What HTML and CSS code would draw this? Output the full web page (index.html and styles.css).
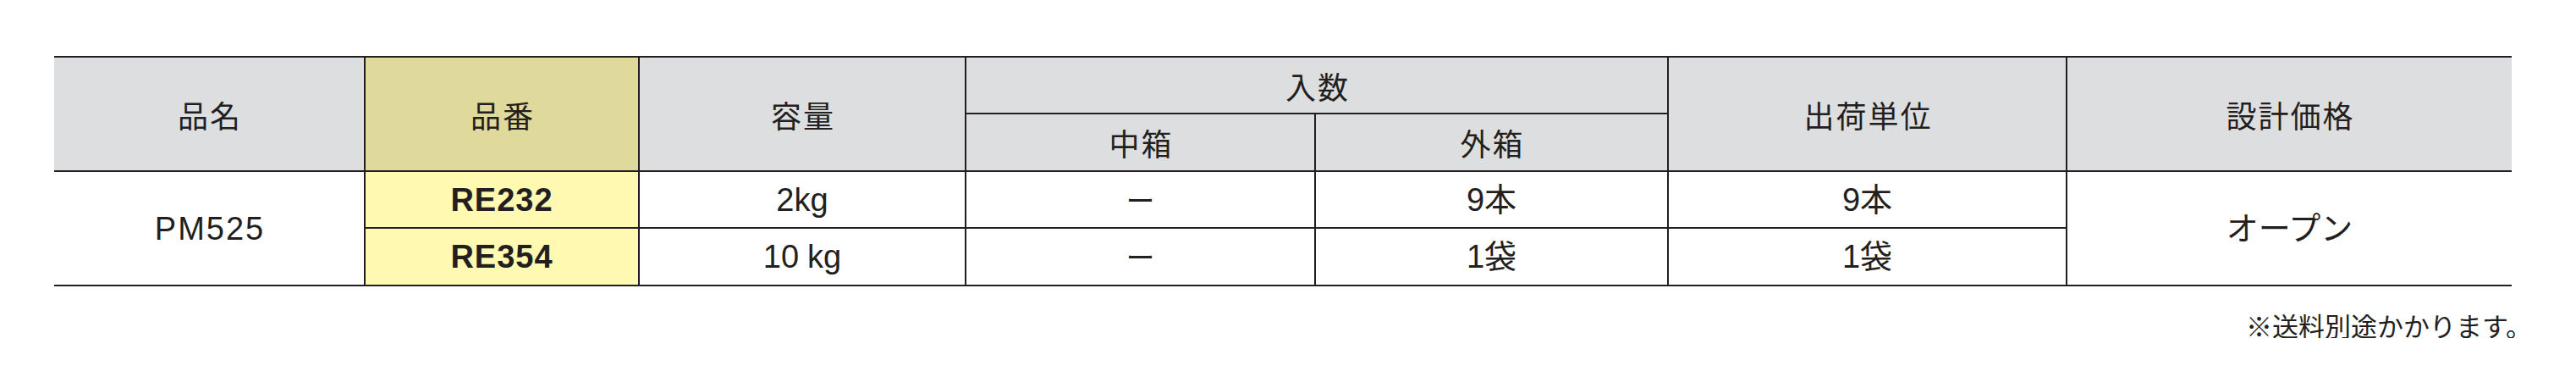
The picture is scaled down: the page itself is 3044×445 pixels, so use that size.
FILE: index.html
```html
<!DOCTYPE html>
<html lang="ja">
<head>
<meta charset="utf-8">
<title>PM525 仕様</title>
<link rel="stylesheet" href="styles.css">
</head>
<body>
<div class="page">
  <table class="spec">
    <colgroup>
      <col class="c-name">
      <col class="c-code">
      <col class="c-cap">
      <col class="c-inner">
      <col class="c-outer">
      <col class="c-unit">
      <col class="c-price">
    </colgroup>
    <thead>
      <tr class="hrow1">
        <th rowspan="2">品名</th>
        <th rowspan="2" class="code-head">品番</th>
        <th rowspan="2">容量</th>
        <th colspan="2" class="group">入数</th>
        <th rowspan="2">出荷単位</th>
        <th rowspan="2" class="last">設計価格</th>
      </tr>
      <tr class="hrow2">
        <th>中箱</th>
        <th>外箱</th>
      </tr>
    </thead>
    <tbody>
      <tr class="brow1">
        <td rowspan="2" class="name">PM525</td>
        <td class="code">RE232</td>
        <td>2kg</td>
        <td class="dash">ー</td>
        <td>9本</td>
        <td>9本</td>
        <td rowspan="2" class="last">オープン</td>
      </tr>
      <tr class="brow2">
        <td class="code">RE354</td>
        <td>10<span class="unit-gap">kg</span></td>
        <td class="dash">ー</td>
        <td>1袋</td>
        <td>1袋</td>
      </tr>
    </tbody>
  </table>
  <p class="note">※送料別途かかります。</p>
</div>
</body>
</html>
```

FILE: styles.css
```css
html, body {
  margin: 0;
  padding: 0;
  background: #ffffff;
}

body {
  font-family: "Liberation Sans", "Noto Sans CJK JP", sans-serif;
  color: #231f20;
}

.page {
  padding: 66px 0 0 64px;
}

.spec {
  width: 2904px;
  table-layout: fixed;
  border-collapse: separate;
  border-spacing: 0;
  border-top: 2px solid #231f20;
}

.c-name { width: 368px; }
.c-code { width: 324px; }
.c-cap { width: 386px; }
.c-inner { width: 413px; }
.c-outer { width: 417px; }
.c-unit { width: 471px; }
.c-price { width: 525px; }

.spec th,
.spec td {
  padding: 0;
  border-right: 2px solid #231f20;
  border-bottom: 2px solid #231f20;
  text-align: center;
  vertical-align: middle;
  line-height: 1;
}

.spec th.last,
.spec td.last {
  border-right: none;
}

.spec th {
  background: #dddedf;
  font-family: "Noto Sans CJK JP", sans-serif;
  font-weight: 400;
  font-size: 36px;
  letter-spacing: 2px;
  padding-left: 2px;
}

.spec th.code-head {
  background: #dfd99b;
}

.hrow1 { height: 67px; }
.hrow2 { height: 68px; }
.brow1 { height: 67px; }
.brow2 { height: 68px; }

.spec td {
  background: #ffffff;
  font-size: 38px;
}

.spec td.name {
  letter-spacing: 2px;
  padding-left: 2px;
}

.spec td.code {
  background: #fff9b1;
  font-weight: 700;
  letter-spacing: 1px;
}

.spec td.dash {
  font-family: "Noto Sans CJK JP", sans-serif;
  font-size: 34px;
}

.unit-gap {
  margin-left: 10px;
}

.note {
  width: 2928px;
  margin: 30px 0 0 0;
  text-align: right;
  font-family: "Noto Sans CJK JP", sans-serif;
  font-size: 31px;
  line-height: 1;
}
```
